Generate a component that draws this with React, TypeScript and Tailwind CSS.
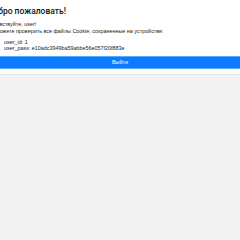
import React from "react";

export default function App() {
  return (
    <div
      className="w-[240px] h-[240px] overflow-hidden bg-[#f2f2f2]"
      style={{ fontFamily: '"Liberation Sans", Arial, sans-serif' }}
    >
      <div className="-ml-[13px] w-[266px] bg-white pt-[5px] pb-[5px] border-b border-[#e4e4e4]">
        <h1 className="text-[8.5px] leading-[12px] font-medium text-[#111] font-['Roboto',sans-serif]">
          Добро пожаловать!
        </h1>
        <p className="mt-[4px] text-[5.4px] leading-[7px] text-[#222]">Здравствуйте, user!</p>
        <p className="text-[5.4px] leading-[7px] text-[#222]">
          Вы можете проверить все файлы Cookie, сохраненные на устройстве:
        </p>
        <ul className="mt-[4px] pl-[17px] text-[5.4px] leading-[6px] text-[#222]">
          <li>user_id: 1</li>
          <li>user_pass: e10adc3949ba59abbe56e057f20f883e</li>
        </ul>
        <button className="block mt-[5px] w-full h-[13px] bg-[#0a7bff] border-y border-[#5aa8ff] text-white text-[5.4px] leading-[11px]">
          Выйти
        </button>
      </div>
    </div>
  );
}
